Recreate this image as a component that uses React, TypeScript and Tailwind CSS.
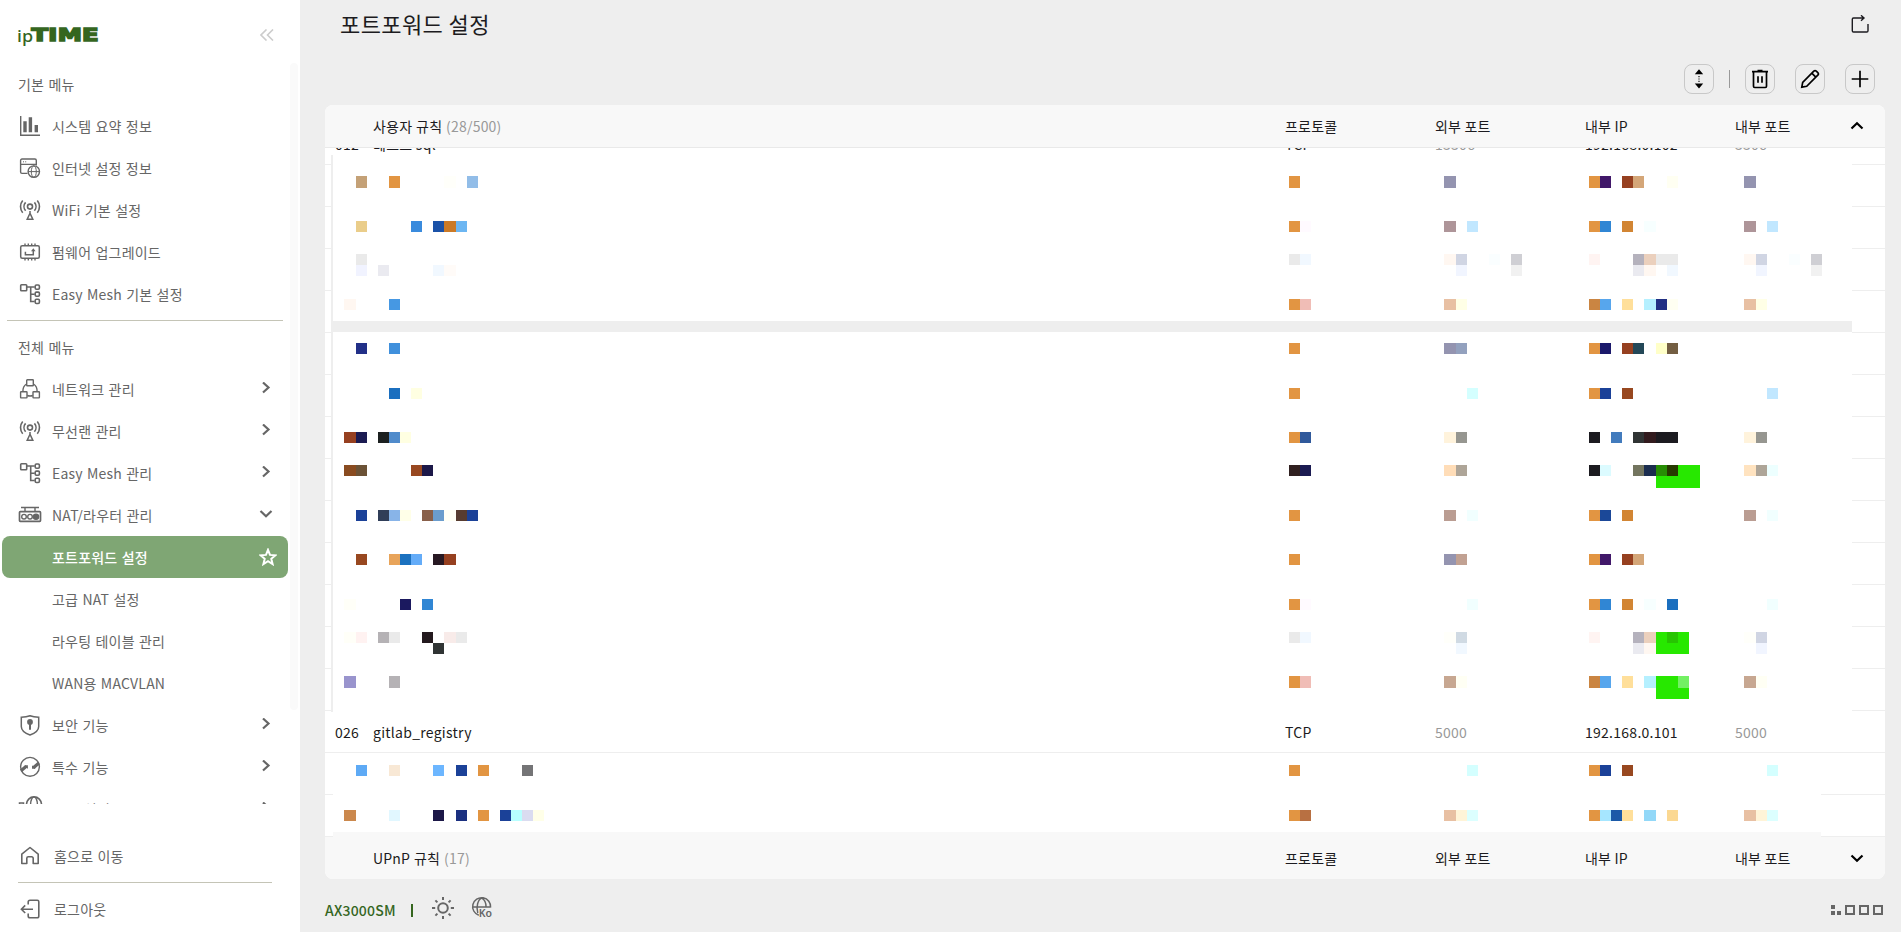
import React from 'react';
import clsx from 'clsx';

type IconName =
  | 'chart'
  | 'internet'
  | 'wifi'
  | 'firmware'
  | 'mesh'
  | 'network'
  | 'nat'
  | 'shield'
  | 'special'
  | 'vpn';

interface MenuItem {
  label: string;
  icon: IconName;
  open?: boolean;
  children?: string[];
}

interface Rule {
  no: string;
  name: string;
  protocol: string;
  externalPort: string;
  internalIp: string;
  internalPort: string;
}

// [column index, colour]
type Cell = [number, string];

interface MosaicRow {
  top: number;
  height?: number;
  cells: Cell[];
}

const basicMenu: MenuItem[] = [
  { label: '시스템 요약 정보', icon: 'chart' },
  { label: '인터넷 설정 정보', icon: 'internet' },
  { label: 'WiFi 기본 설정', icon: 'wifi' },
  { label: '펌웨어 업그레이드', icon: 'firmware' },
  { label: 'Easy Mesh 기본 설정', icon: 'mesh' },
];

const fullMenu: MenuItem[] = [
  { label: '네트워크 관리', icon: 'network' },
  { label: '무선랜 관리', icon: 'wifi' },
  { label: 'Easy Mesh 관리', icon: 'mesh' },
  {
    label: 'NAT/라우터 관리',
    icon: 'nat',
    open: true,
    children: ['포트포워드 설정', '고급 NAT 설정', '라우팅 테이블 관리', 'WAN용 MACVLAN'],
  },
  { label: '보안 기능', icon: 'shield' },
  { label: '특수 기능', icon: 'special' },
  { label: 'VPN 설정', icon: 'vpn' },
];

const activeMenu = '포트포워드 설정';

const emptyRule: Rule = { no: '', name: '', protocol: '', externalPort: '', internalIp: '', internalPort: '' };

const rules: Rule[] = [
  { no: '012', name: '테스트 sql', protocol: 'TCP', externalPort: '13306', internalIp: '192.168.0.102', internalPort: '3306' },
  ...Array.from({ length: 13 }, () => emptyRule),
  { no: '026', name: 'gitlab_registry', protocol: 'TCP', externalPort: '5000', internalIp: '192.168.0.101', internalPort: '5000' },
  emptyRule,
  emptyRule,
];

const O = '#e29542';

const mosaic: MosaicRow[] = [
  { top: 176, height: 12, cells: [[32, '#c4a177'], [35, O], [40, '#fffffa'], [42, '#92bde8'], [116, O], [130, '#9494b0'], [143, O], [144, '#411869'], [146, '#964020'], [147, '#d4a678'], [150, '#fffff2'], [157, '#9494b0']] },
  { top: 221, cells: [[32, '#eacd8a'], [37, '#3a8bdd'], [39, '#1b52a8'], [40, '#cb7a27'], [41, '#6cb6f2'], [116, O], [117, '#fffaff'], [130, '#ae9599'], [132, '#c1e7ff'], [143, O], [144, '#3086d4'], [146, '#d28533'], [148, '#f7ffff'], [157, '#ae9599'], [159, '#c1e7ff']] },
  { top: 254, cells: [[32, '#eaeaea'], [116, '#eaeaea'], [117, '#f1f8ff'], [130, '#fff7f1'], [131, '#d0d5e3'], [134, '#fafeff'], [136, '#cfcfd4'], [143, '#fff4f2'], [147, '#b5b2bd'], [148, '#ebd0bd'], [149, '#eaeaea'], [150, '#eaeaea'], [157, '#fff7f1'], [158, '#d0d5e3'], [161, '#fafeff'], [163, '#cfcfd4']] },
  { top: 265, cells: [[32, '#f1f3ff'], [34, '#eaeaf0'], [39, '#f1f8ff'], [40, '#fffbf8'], [131, '#f1f5ff'], [136, '#f1f1f1'], [147, '#eaeaf0'], [148, '#fff7f1'], [150, '#f1f8ff'], [158, '#f1f5ff'], [163, '#f1f1f1']] },
  { top: 299, cells: [[31, '#fff7f1'], [35, '#4698e3'], [116, O], [117, '#f0bdb6'], [130, '#e8c0a3'], [131, '#ffffe6'], [143, '#ca8542'], [144, '#57a6ed'], [146, '#ffdf9a'], [148, '#b5f0ff'], [149, '#223083'], [150, '#fffff2'], [157, '#e8c0a3'], [158, '#ffffe6']] },
  { top: 343, cells: [[32, '#223088'], [35, '#4090dc'], [116, O], [130, '#9494b0'], [131, '#93a1be'], [143, O], [144, '#1b196b'], [146, '#964020'], [147, '#244858'], [149, '#ffffc8'], [150, '#735e42']] },
  { top: 388, cells: [[35, '#1b6fbf'], [37, '#ffffe2'], [116, O], [132, '#d4ffff'], [143, O], [144, '#1b4198'], [146, '#984820'], [159, '#c1e7ff']] },
  { top: 432, cells: [[31, '#964020'], [32, '#1b1b52'], [34, '#1c2020'], [35, '#508bcb'], [36, '#ffffe2'], [116, O], [117, '#30599b'], [130, '#fff3dc'], [131, '#969690'], [143, '#1c1b20'], [145, '#427bbd'], [147, '#303434'], [148, '#321b1e'], [149, '#1c1b20'], [150, '#1c1b20'], [157, '#fff3dc'], [158, '#969690']] },
  { top: 465, cells: [[31, '#894b20'], [32, '#6b5236'], [37, '#984820'], [38, '#1c1848'], [116, '#302020'], [117, '#1b1b52'], [130, '#ffddb8'], [131, '#aea598'], [143, '#1c1b20'], [144, '#dcfbff'], [147, '#73755f'], [148, '#1b2d4f'], [149, '#278d04'], [150, '#273900'], [157, '#ffe3c0'], [158, '#aea598'], [159, '#edffff']] },
  { top: 510, cells: [[32, '#1b4198'], [34, '#303e58'], [35, '#88b4e8'], [36, '#ffffe8'], [38, '#89604a'], [39, '#6b9dcd'], [40, '#fffff5'], [41, '#573c30'], [42, '#1b4198'], [116, O], [130, '#ba9d92'], [132, '#f1ffff'], [143, O], [144, '#1b4898'], [146, '#d28533'], [157, '#ba9d92'], [159, '#f1ffff']] },
  { top: 554, cells: [[32, '#984820'], [35, '#e8a45a'], [36, '#1b71bf'], [37, '#64acf8'], [39, '#281923'], [40, '#964020'], [116, O], [130, '#9494b0'], [131, '#c1a192'], [143, O], [144, '#411869'], [146, '#964020'], [147, '#d4a678']] },
  { top: 599, cells: [[31, '#fffff8'], [36, '#1b195f'], [38, '#3086d4'], [116, O], [117, '#fffaff'], [132, '#f1ffff'], [143, O], [144, '#3086d4'], [146, '#d28533'], [148, '#f7ffff'], [150, '#1b6fbf'], [159, '#f1ffff']] },
  { top: 632, cells: [[31, '#fffff8'], [32, '#fff2f1'], [34, '#b5b2b5'], [35, '#eaeaea'], [38, '#231a1e'], [40, '#f8ebe9'], [41, '#eaeaea'], [116, '#eaeaea'], [117, '#f1f8ff'], [130, '#fffffa'], [131, '#d0dae3'], [143, '#fff4f2'], [147, '#b5b2bd'], [148, '#ebd0bd'], [150, '#27c502'], [157, '#fffffa'], [158, '#d0d5e3']] },
  { top: 643, cells: [[39, '#303434'], [131, '#f1f8ff'], [147, '#eaeaf0'], [148, '#fff7f1'], [158, '#f1f5ff']] },
  { top: 676, height: 12, cells: [[31, '#9994cd'], [35, '#b5b2b5'], [116, O], [117, '#f0bdb6'], [130, '#c7a791'], [131, '#fffff4'], [143, '#ca8542'], [144, '#57a6ed'], [146, '#ffdf9a'], [148, '#b5f0ff'], [151, '#73f063'], [157, '#c7a791'], [158, '#fffff4']] },
  { top: 765, cells: [[32, '#5eaaf5'], [35, '#f8e8d5'], [39, '#6cb6ff'], [41, '#1b4198'], [43, O], [47, '#747476'], [116, O], [132, '#d4ffff'], [143, O], [144, '#1b4198'], [146, '#984820'], [159, '#d4ffff']] },
  { top: 810, cells: [[31, '#cb884d'], [35, '#e1f7ff'], [39, '#1c1848'], [41, '#1b3080'], [43, O], [45, '#1b4198'], [46, '#b8ffff'], [47, '#dadcf0'], [48, '#ffffe8'], [116, O], [117, '#b87042'], [130, '#e8c0a3'], [131, '#fff4d8'], [132, '#dcffff'], [143, O], [144, '#a6e6ff'], [145, '#1b59a8'], [146, '#ffdf9a'], [148, '#92d8f8'], [150, '#fbd892'], [157, '#e8c0a3'], [158, '#fff4d8'], [159, '#dcffff']] },
];

const cellX = (n: number) => Math.round((n * 100) / 9);

const icons: Record<IconName, React.ReactNode> = {
  chart: (
    <>
      <path d="M.7 0v19.3H20" strokeWidth="1.4" />
      <path d="M5 5.2v11.1M10.4 1.2v15.1M16.3 9v7.3" strokeWidth="3.4" />
    </>
  ),
  internet: (
    <>
      <path d="M7.5 15.4H2A1.4 1.4 0 0 1 .6 14V2.4A1.4 1.4 0 0 1 2 1h12.9a1.4 1.4 0 0 1 1.4 1.4v5.2M.6 6.4h15.7" />
      <path d="M3 3.8h1M5.2 3.8h1" strokeWidth="1" />
      <circle cx="13.8" cy="13.6" r="5.7" />
      <ellipse cx="13.8" cy="13.6" rx="2.5" ry="5.7" strokeWidth="1" />
      <path d="M8.1 13.6h11.4" strokeWidth="1" />
    </>
  ),
  wifi: (
    <>
      <circle cx="10" cy="6.6" r="2.5" strokeWidth="1.6" />
      <path d="M5.6 2.4c-2.1 2.4-2.1 6 0 8.4M14.4 2.4c2.1 2.4 2.1 6 0 8.4M2.7.4c-2.9 3.5-2.9 8.9 0 12.4M17.3.4c2.9 3.5 2.9 8.9 0 12.4" strokeWidth="1.6" />
      <path d="M10 11v2M10 13.2 7.2 19.3h5.6z" strokeWidth="1.5" />
    </>
  ),
  firmware: (
    <>
      <rect x=".7" y="3.7" width="18.6" height="12.6" rx="1.5" strokeWidth="1.5" />
      <path d="M5 1.5v2M8.3 1.5v2M11.7 1.5v2M15 1.5v2M5 16.5v2M8.3 16.5v2M11.7 16.5v2M15 16.5v2" />
      <path d="M5.4 9.8v3h7.9V8.5" strokeWidth="1.5" />
      <path d="m11 9.3 2.3-3 2.3 3z" fill="currentColor" stroke="none" />
    </>
  ),
  mesh: (
    <>
      <rect x=".7" y=".7" width="6" height="6" rx=".8" strokeWidth="1.6" />
      <path d="M6.7 3h8M10.7 3v14.5h4M10.7 10.2h4" strokeWidth="1.6" />
      <rect x="15.2" y="1" width="4.2" height="4.2" rx="1.2" strokeWidth="1.6" />
      <rect x="15.2" y="8.1" width="4.2" height="4.2" rx="1.2" strokeWidth="1.6" />
      <rect x="15.2" y="15.3" width="4.2" height="4.2" rx="1.2" strokeWidth="1.6" />
    </>
  ),
  network: (
    <>
      <rect x="6.7" y=".8" width="6.6" height="6" rx=".6" />
      <rect x=".6" y="12.7" width="6.4" height="6.2" rx=".6" />
      <rect x="13" y="12.7" width="6.4" height="6.2" rx=".6" />
      <path d="M6.5 5C4 6.500 2.8 9.500 2.9 12.600M13.5 5c2.5 1.5 3.7 4.5 3.600 7.600M7.200 16.500c2 .7 3.800.7 5.600 0" />
    </>
  ),
  nat: (
    <>
      <path d="M1 2.5h18M5 2.5v4M15 2.5v4" />
      <rect x="-.5" y="6.7" width="21" height="9.6" rx=".8" strokeWidth="1.7" />
      <circle cx="4" cy="11.7" r="2.3" />
      <circle cx="10" cy="11.7" r="2.3" />
      <circle cx="16" cy="11.7" r="2.6" fill="currentColor" />
    </>
  ),
  shield: (
    <>
      <path d="M10 .8c2.5 1 5.5 1.4 8.700 1.4v9.300c0 4-3.900 6.800-8.700 8.500-4.800-1.700-8.700-4.500-8.700-8.500V2.200C4.500 2.200 7.500 1.800 10 .8z" strokeWidth="1.5" />
      <circle cx="10" cy="7" r="2.9" fill="currentColor" stroke="none" />
      <path d="M10 8v6.800" strokeWidth="2" />
    </>
  ),
  special: (
    <>
      <circle cx="10" cy="9.8" r="9.4" strokeWidth="1.4" />
      <path d="M1 13.800 6.300 9.300M13.400 10.700 18.900 6" strokeWidth="3.2" />
      <path d="M4.500 8.300h3.400v3.600zM15.500 11.800H12V8.200z" fill="currentColor" stroke="none" />
    </>
  ),
  vpn: (
    <>
      <path d="M-.5 9V4h4v5" strokeWidth="1.5" />
      <circle cx="14" cy="5.4" r="7.5" strokeWidth="1.6" />
      <ellipse cx="14" cy="5.4" rx="3.4" ry="7.5" />
    </>
  ),
};

const MenuIcon: React.FC<{ name: IconName }> = ({ name }) => (
  <svg
    viewBox="0 0 20 20"
    className="w-5 h-5 shrink-0 overflow-visible"
    fill="none"
    stroke="currentColor"
    strokeWidth="1.4"
  >
    {icons[name]}
  </svg>
);

const Chevron: React.FC<{ d: string; className?: string }> = ({ d, className }) => (
  <svg viewBox="0 0 14 14" className={clsx('w-3.5 h-3.5', className)} fill="none" stroke="currentColor" strokeWidth="2.2">
    <path d={d} />
  </svg>
);

const Logo: React.FC = () => (
  <svg width="84" height="22" className="overflow-visible" fill="#35661f">
    <text x="-1" y="16" fontFamily="Noto Sans" fontSize="16" fontWeight="500" textLength="16.5" lengthAdjust="spacingAndGlyphs">
      ip
    </text>
    <text
      x="13.5"
      y="15.4"
      fontFamily="DejaVu Sans"
      fontSize="17.5"
      fontWeight="700"
      textLength="67.5"
      lengthAdjust="spacingAndGlyphs"
      stroke="#35661f"
      strokeWidth="1.5"
    >
      TIME
    </text>
  </svg>
);

const MenuRow: React.FC<{ item: MenuItem; expandable?: boolean }> = ({ item, expandable }) => (
  <div className="flex items-center h-[42px] pl-5 pr-[15px]">
    <MenuIcon name={item.icon} />
    <span className="ml-3 flex-1">{item.label}</span>
    {expandable && <Chevron d={item.open ? 'M1.5 3 7 8.300 12.500 3' : 'M4 .5 9.500 5.500 4 10.500'} />}
  </div>
);

const SubMenuRow: React.FC<{ label: string }> = ({ label }) => {
  const active = label === activeMenu;

  return (
    <div
      className={clsx(
        'flex items-center justify-between h-[42px] ml-0.5 pl-[50px] pr-[11px] rounded-lg',
        active && 'bg-[#7fa674] text-white font-medium'
      )}
    >
      <span>{label}</span>
      {active && (
        <svg viewBox="0 0 18 18" className="w-[18px] h-[18px]" fill="none" stroke="currentColor" strokeWidth="2">
          <path d="m9 1.800 2 5.100 5.500.4-4.200 3.500 1.300 5.300L9 13.200l-4.600 2.900 1.300-5.300L1.500 7.300 7 6.900z" />
        </svg>
      )}
    </div>
  );
};

const Sidebar: React.FC = () => (
  <aside className="flex flex-col w-[300px] h-full bg-white shrink-0 [word-spacing:0.9px]">
    <div className="flex justify-between pl-[18px] pr-[26px] pt-[26px] h-[63px] shrink-0">
      <Logo />
      <svg width="14" height="12" viewBox="0 0 14 12" className="mt-[3px] text-[#cccccc]" fill="none" stroke="currentColor" strokeWidth="1.6">
        <path d="M6.500.5 1 6l5.500 5.500M13 .5 7.500 6l5.500 5.500" />
      </svg>
    </div>

    <div className="flex h-[741px] overflow-hidden">
      <nav className="w-[288px]">
        <h2 className="flex items-center h-[42px] pl-[18px]">기본 메뉴</h2>
        {basicMenu.map((item) => (
          <MenuRow key={item.label} item={item} />
        ))}
        <div className="h-px my-[5px] ml-[7px] mr-[5px] bg-[#c4c4b6]" />
        <h2 className="flex items-center h-[42px] pl-[18px]">전체 메뉴</h2>
        {fullMenu.map((item) => (
          <React.Fragment key={item.label}>
            <MenuRow item={item} expandable />
            {item.children?.map((child) => <SubMenuRow key={child} label={child} />)}
          </React.Fragment>
        ))}
      </nav>
      {/* Scrollbar */}
      <div className="w-2 h-[647px] ml-0.5 rounded bg-[#fafafa]" />
    </div>

    <div className="pt-[31px] px-[18px]">
      <div className="flex items-center h-[42px] pl-0.5">
        <svg viewBox="0 0 20 20" className="w-5 h-5" fill="none" stroke="currentColor" strokeWidth="1.6">
          <path d="M1.800 8.200 10 1.500l8.200 6.700v9.300h-5v-5.200a1.500 1.500 0 0 0-1.500-1.500H8.300a1.500 1.500 0 0 0-1.500 1.500v5.200h-5z" strokeLinejoin="round" />
        </svg>
        <span className="ml-3.5">홈으로 이동</span>
      </div>
      <div className="h-px my-[5px] mr-[10px] bg-[#c4c4b6]" />
      <div className="flex items-center h-[42px] pl-0.5">
        <svg viewBox="0 0 20 20" className="w-5 h-5" fill="none" stroke="currentColor" strokeWidth="1.6">
          <path d="M8.200 5.500V3a1.800 1.800 0 0 1 1.800-1.800h7.300A1.500 1.500 0 0 1 18.800 2.700v14.600a1.500 1.500 0 0 1-1.500 1.500H10A1.800 1.800 0 0 1 8.200 17v-2.500M13 10.200H1.500M5.200 6.400 1.400 10.200l3.800 3.800" />
        </svg>
        <span className="ml-3.5">로그아웃</span>
      </div>
    </div>
  </aside>
);

const ToolButton: React.FC<{ children: React.ReactNode; className?: string }> = ({ children, className }) => (
  <button
    className={clsx(
      'flex items-center justify-center w-[30px] h-[30px] rounded-lg border border-[#c8c8c8] text-black',
      className
    )}
  >
    <svg viewBox="0 0 20 20" className="w-5 h-5 shrink-0" fill="none" stroke="currentColor" strokeWidth="1.7">
      {children}
    </svg>
  </button>
);

const SectionHeader: React.FC<{ title: string; count: string; open?: boolean }> = ({ title, count, open }) => (
  <div className="flex items-center h-[42px] pl-12 bg-[#f8f8f8]">
    <span className="flex-1 [word-spacing:0.5px]">
      {title} <span className="text-[#999999]">({count})</span>
    </span>
    <span className="w-[150px]">프로토콜</span>
    <span className="w-[150px]">외부 포트</span>
    <span className="w-[150px]">내부 IP</span>
    <span className="w-[115px]">내부 포트</span>
    <Chevron d={open ? 'M1.5 9.500 7 4.200l5.500 5.300' : 'M1.5 4.500 7 9.800l5.500-5.300'} className="mr-[21px] text-black" />
  </div>
);

const RuleRow: React.FC<{ rule: Rule }> = ({ rule }) => (
  <div className="flex items-center h-[42px] pl-[10px] border-b border-[#eeeeee] tracking-[0.27px]">
    <span className="w-[38px]">{rule.no}</span>
    <span className="flex-1">{rule.name}</span>
    <span className="w-[150px]">{rule.protocol}</span>
    <span className="w-[150px] text-[#999999]">{rule.externalPort}</span>
    <span className="w-[150px]">{rule.internalIp}</span>
    <span className="w-[150px] text-[#999999]">{rule.internalPort}</span>
  </div>
);

// Pixelated cover over the private rules
const Mosaic: React.FC = () => (
  <div className="absolute inset-0 pointer-events-none">
    <div className="absolute left-[331px] top-[155px] w-[1521px] h-[557px] bg-white border-l-2 border-[#eeeeee]" />
    <div className="absolute left-[333px] top-[321px] w-[1519px] h-[11px] bg-[#eeeeee]" />
    <div className="absolute left-[333px] top-[754px] w-[1488px] h-[78px] bg-white" />
    <div className="absolute left-[333px] top-[832px] w-[1488px] h-[5px] bg-[#f8f8f8]" />
    <div className="absolute left-[1656px] top-[465px] w-[44px] h-[23px] bg-[#27e800]" />
    <div className="absolute left-[1656px] top-[632px] w-[33px] h-[22px] bg-[#27e800]" />
    <div className="absolute left-[1656px] top-[676px] w-[33px] h-[23px] bg-[#27e800]" />
    {mosaic.map((row) =>
      row.cells.map(([n, color]) => (
        <div
          key={`${row.top}-${n}`}
          className="absolute"
          style={{
            left: cellX(n),
            top: row.top,
            width: cellX(n + 1) - cellX(n),
            height: row.height ?? 11,
            backgroundColor: color,
          }}
        />
      ))
    )}
  </div>
);

const Footer: React.FC = () => (
  <footer className="flex items-center h-[53px] pt-[9px]">
    <span className="font-medium text-[#35661f]">AX3000SM</span>
    <div className="w-0.5 h-[13px] ml-[15px] bg-[#35661f]" />
    <svg viewBox="0 0 22 22" className="w-[22px] h-[22px] ml-[19px] -mt-1 text-[#666666]" fill="none" stroke="currentColor" strokeWidth="2">
      <circle cx="11" cy="11" r="4.8" />
      <path d="M11 0v3M11 19v3M0 11h3.200M18.800 11H22M3.400 3.400l2 2M16.600 16.600l2 2M3.400 18.600l2-2M16.600 5.400l2-2" />
    </svg>
    <svg viewBox="0 0 21 22" className="w-[21px] h-[22px] ml-[18px] -mt-1 text-[#666666] overflow-visible" fill="none" stroke="currentColor" strokeWidth="1.5">
      <path d="M6.800 18.200A9 9 0 1 1 18.600 10.500M5.800 16c-2-6 .2-13.600 3.800-14.900M9.600 1.100c2.800 1.300 4.600 5.300 4.500 9.400M1 10h17.600" />
      <text x="6.8" y="20" fontFamily="Noto Sans" fontSize="10.5" fontWeight="600" letterSpacing="0" fill="currentColor" stroke="none">
        Ko
      </text>
    </svg>
    <div className="flex items-end gap-1 ml-auto mr-[18px]">
      <div className="grid grid-cols-2 gap-0.5">
        <i className="w-1 h-1 bg-[#666666]" />
        <i className="w-1 h-1" />
        <i className="w-1 h-1 bg-[#666666]" />
        <i className="w-1 h-1 bg-[#666666]" />
      </div>
      <i className="w-[10px] h-[10px] border-2 border-[#666666]" />
      <i className="w-[10px] h-[10px] border-2 border-[#666666]" />
      <i className="w-[10px] h-[10px] border-2 border-[#666666]" />
    </div>
  </footer>
);

const App: React.FC = () => {
  return (
    <div className="relative flex h-[932px] overflow-hidden bg-[#eeeeee] text-[14px] leading-5 tracking-[0.2px] text-[#666666] font-['Noto_Sans_CJK_KR','Noto_Sans',sans-serif]">
      <Sidebar />

      <main className="flex flex-col flex-1 pl-[25px] text-[#1c1b20]">
        {/* Title */}
        <header className="flex items-center justify-between h-[46px] pl-[15px] pr-8">
          <h1 className="text-[22px] leading-8 tracking-[0.4px]">{activeMenu}</h1>
          <svg viewBox="0 0 18 18" className="w-[18px] h-[18px] mt-0.5" fill="none" stroke="currentColor" strokeWidth="1.4">
            <path d="M13 3H2.500A1.200 1.200 0 0 0 1.300 4.200v11.600A1.200 1.200 0 0 0 2.500 17h13.300a1.200 1.200 0 0 0 1.200-1.200V9M10 .3 13 3l-3 2.700" />
          </svg>
        </header>

        {/* Toolbar */}
        <div className="flex items-center justify-end h-[59px] pr-[26px] pb-[11px] pt-[18px]">
          <ToolButton>
            <path d="m10 .3 4.200 5H5.800zM10 19.500l4.200-5H5.800z" fill="currentColor" stroke="none" />
            <path d="M10 7v1.200M10 9.400v1.200M10 11.800V13" className="text-[#555555]" />
          </ToolButton>
          <div className="w-px h-[18px] ml-[15px] mr-[15px] bg-[#999999]" />
          <ToolButton>
            <path d="M2 2.700h16M7.500 1.500h5" />
            <path d="M3.500 3v14.300a1.200 1.200 0 0 0 1.200 1.200h10.600a1.200 1.200 0 0 0 1.200-1.200V3M8 7.200v6.600M12 7.200v6.600" />
          </ToolButton>
          <ToolButton className="ml-5">
            <path d="M1.800 18.200 2.700 13.300 13.800 2.200a1.800 1.800 0 0 1 2.500 0l1.500 1.500a1.800 1.800 0 0 1 0 2.500L6.700 17.300zM11.800 4.200l4 4" />
          </ToolButton>
          <ToolButton className="ml-5">
            <path d="M10 1.700v16.600M1.700 10h16.600" />
          </ToolButton>
        </div>

        {/* Rule table */}
        <div className="w-[1560px] h-[774px] rounded-lg overflow-hidden bg-white">
          <SectionHeader title="사용자 규칙" count="28/500" open />
          <div className="h-[690px] border-t border-[#e9e9e9] overflow-hidden">
            <div className="-mt-[25px]">
              {rules.map((rule, i) => (
                <RuleRow key={i} rule={rule} />
              ))}
            </div>
          </div>
          <SectionHeader title="UPnP 규칙" count="17" />
        </div>

        <Footer />
      </main>

      <Mosaic />
    </div>
  );
};

export default App;
